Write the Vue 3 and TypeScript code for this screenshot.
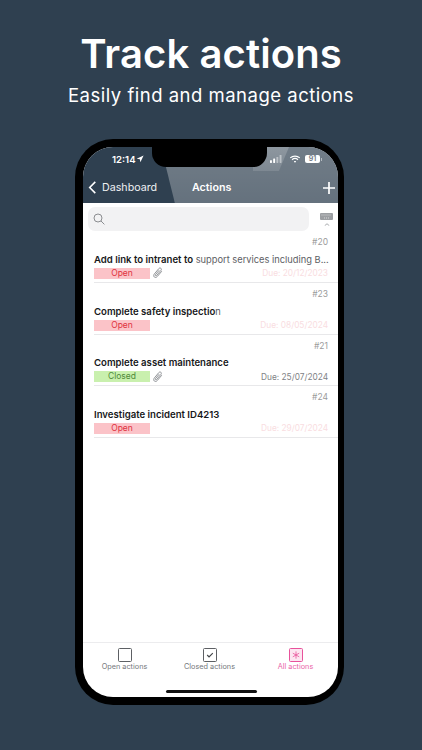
<script setup lang="ts">
interface Row { id: string; dark: string; light?: string; status: 'Open' | 'Closed'; clip: boolean; due: string }
const rows: Row[] = [
  { id: '#20', dark: 'Add link to intranet to', light: ' support services including B...', status: 'Open', clip: true, due: 'Due: 20/12/2023' },
  { id: '#23', dark: 'Complete safety inspectio', light: 'n', status: 'Open', clip: false, due: 'Due: 08/05/2024' },
  { id: '#21', dark: 'Complete asset maintenance', status: 'Closed', clip: true, due: 'Due: 25/07/2024' },
  { id: '#24', dark: 'Investigate incident ID4213', status: 'Open', clip: false, due: 'Due: 29/07/2024' },
]
</script>

<template>
  <main class="page">
    <h1 class="headline">Track actions</h1>
    <p class="sub">Easily find and manage actions</p>
    <div class="phone">
      <div class="screen">
        <div class="notch"></div>
        <div class="sheen"></div>
        <div class="glare"></div>
        <header class="head">
          <div class="status">
            <span class="time">12:14</span>
            <svg class="loc" viewBox="0 0 10 10"><path d="M9.500.5 .8 4.600l4 .6.7 4z" fill="#fff" /></svg>
            <span class="grow"></span>
            <svg class="signal" viewBox="0 0 15 10">
              <rect x="0" y="6.500" width="2.400" height="3.500" rx=".5" fill="#fff" />
              <rect x="4" y="4.500" width="2.400" height="5.500" rx=".5" fill="#fff" />
              <rect x="8" y="2.500" width="2.400" height="7.500" rx=".5" fill="#fff" opacity=".45" />
              <rect x="12" y="0" width="2.400" height="10" rx=".5" fill="#fff" opacity=".45" />
            </svg>
            <svg class="wifi" viewBox="0 0 14 10" fill="none" stroke="#fff" stroke-width="1.500">
              <path d="M1 3.600c3.400-3 8.600-3 12 0" />
              <path d="M3.300 5.900c2.100-1.800 5.300-1.800 7.400 0" />
              <path d="M7 9.800 5.500 8c.9-.6 2.100-.6 3 0z" fill="#fff" stroke="none" />
            </svg>
            <span class="batt">91</span>
            <span class="nub"></span>
          </div>
          <nav class="nav">
            <svg class="back" viewBox="0 0 9 14" fill="none" stroke="#fff" stroke-width="1.700"><path d="M7.500 1 1.500 7l6 6" /></svg>
            <span class="back-text">Dashboard</span>
            <span class="nav-title">Actions</span>
            <svg class="plus" viewBox="0 0 12 12" stroke="#fff" stroke-width="1.700"><path d="M6 0v12M0 6h12" /></svg>
          </nav>
        </header>
        <div class="search-row">
          <div class="search">
            <svg viewBox="0 0 12 12" fill="none" stroke="#8b8d90" stroke-width="1"><circle cx="5" cy="5" r="4" /><path d="m8 8 3.400 3.400" /></svg>
          </div>
          <div class="kbd">
            <svg class="keys" viewBox="0 0 13 7">
              <rect width="13" height="7" rx="1" fill="#9a9da1" />
              <path d="M1.500 2h10M4 5h5" stroke="#e4e5e6" stroke-width=".8" stroke-dasharray="1 1" />
            </svg>
            <svg class="up" viewBox="0 0 8 4" fill="none" stroke="#8d9094" stroke-width="1"><path d="m1 3.500 3-2.500 3 2.500" /></svg>
          </div>
        </div>
        <section class="list">
          <article v-for="row in rows" :key="row.id" class="row">
            <div class="num">{{ row.id }}</div>
            <div class="title">{{ row.dark }}<span class="light">{{ row.light }}</span></div>
            <div class="meta">
              <span class="badge" :class="row.status.toLowerCase()">{{ row.status }}</span>
              <svg v-if="row.clip" class="clip" viewBox="0 0 10 12" fill="none" stroke="#85888c" stroke-width=".9">
                <path d="M8.800 4.200 4.300 9.500c-.9 1.100-2.200 1.200-3 .5s-.8-2 .1-3.100l4.400-5.300c.6-.7 1.500-.8 2.100-.3s.6 1.400 0 2.100L3.600 8.500c-.3.400-.8.400-1.100.2s-.3-.7 0-1.100l3.700-4.400" />
              </svg>
              <span class="due" :class="{ late: row.status === 'Open' }">{{ row.due }}</span>
            </div>
          </article>
        </section>
        <footer class="tabs">
          <div class="tab">
            <span class="box"></span>
            <span>Open actions</span>
          </div>
          <div class="tab">
            <span class="box"><svg viewBox="0 0 10 8" fill="none" stroke="#44474a" stroke-width="1.500"><path d="m1.500 4 2.300 2.300 4.700-4.600" /></svg></span>
            <span>Closed actions</span>
          </div>
          <div class="tab active">
            <span class="box"><svg viewBox="0 0 10 10" fill="none" stroke="#e8529b" stroke-width="1"><path d="M5 .5v9M1 2.700l8 4.600M9 2.700 1 7.300" /></svg></span>
            <span>All actions</span>
          </div>
        </footer>
        <div class="home-wrap"><div class="home"></div></div>
      </div>
    </div>
  </main>
</template>

<style>
html, body { margin: 0; background: #2f4050; }
</style>

<style scoped>
.page {
  width: 422px;
  height: 750px;
  overflow: hidden;
  background: #2f4050;
  display: flex;
  flex-direction: column;
  align-items: center;
  font-family: "Inter", "Liberation Sans", sans-serif;
  color: #fff;
}
.headline {
  margin: 30px 0 0;
  font-size: 40px;
  line-height: 48px;
  font-weight: 600;
  letter-spacing: .1px;
}
.sub {
  margin: 4px 0 0;
  font-size: 18.500px;
  line-height: 26px;
  font-weight: 400;
  letter-spacing: .5px;
}
.phone {
  margin-top: 31px;
  margin-left: -3px;
  width: 269px;
  height: 566px;
  box-sizing: border-box;
  padding: 8px 6px 8px 8px;
  background: #000;
  border-radius: 38px;
}
.screen {
  position: relative;
  height: 100%;
  background: #fff;
  border-radius: 30px;
  overflow: hidden;
  display: flex;
  flex-direction: column;
}
.notch {
  position: absolute;
  z-index: 3;
  top: -2px;
  left: 69px;
  width: 115px;
  height: 22px;
  background: #000;
  border-radius: 0 0 14px 14px;
}
.sheen {
  position: absolute;
  z-index: 2;
  top: 0;
  left: 0;
  right: 0;
  height: 85px;
  background: linear-gradient(180deg, rgba(255, 255, 255, .32), rgba(255, 255, 255, .26) 66%, rgba(255, 255, 255, .015) 66%, rgba(255, 255, 255, .015));
  clip-path: polygon(78px 0, 100% 0, 100% 100%, 99px 100%);
  pointer-events: none;
}
.glare {
  position: absolute;
  z-index: 2;
  top: 0;
  left: 170px;
  width: 36px;
  height: 24px;
  background: linear-gradient(180deg, rgba(255, 255, 255, .2), rgba(255, 255, 255, .12));
  clip-path: polygon(0 0, 100% 0, 72% 100%, 0 100%);
  pointer-events: none;
}
.head {
  flex: none;
  height: 56px;
  background: #2f4050;
  position: relative;
  z-index: 1;
}
.status {
  height: 24px;
  padding: 0 0 0 29px;
  box-sizing: border-box;
  display: flex;
  align-items: center;
}
.time { font-size: 9.600px; font-weight: 600; position: relative; z-index: 4; }
.loc { width: 8px; height: 8px; position: relative; z-index: 4; }
.grow { flex: 1; }
.signal { width: 12px; height: 8px; position: relative; z-index: 4; }
.wifi { width: 12px; height: 8px; margin-left: 7px; position: relative; z-index: 4; }
.batt {
  position: relative;
  z-index: 4;
  margin-left: 4px;
  width: 15px;
  height: 8px;
  border-radius: 2px;
  background: #fff;
  color: #3c4a58;
  font-size: 7px;
  font-weight: 700;
  line-height: 8px;
  text-align: center;
}
.nub { width: 1px; height: 3px; margin: 0 16px 0 1px; background: rgba(255, 255, 255, .5); position: relative; z-index: 4; }
.nav {
  height: 32px;
  padding-top: 1px;
  box-sizing: border-box;
  display: flex;
  align-items: center;
  font-size: 10.700px;
  position: relative;
  z-index: 4;
}
.back { width: 9px; height: 13px; margin-left: 5px; }
.back-text { margin-left: 5px; width: 90px; color: #eef0f2; }
.nav-title { font-weight: 600; }
.plus { width: 12px; height: 12px; margin-left: auto; margin-right: 3px; }
.search-row {
  flex: none;
  height: 28px;
  display: flex;
  align-items: flex-start;
  padding: 4px 5px 0;
  box-sizing: border-box;
}
.search {
  width: 221px;
  height: 24px;
  box-sizing: border-box;
  padding-left: 5px;
  background: #f2f2f3;
  border-radius: 7px;
  display: flex;
  align-items: center;
}
.search svg { width: 12px; height: 12px; }
.kbd {
  margin: 6px 0 0 11px;
  width: 13px;
  display: flex;
  flex-direction: column;
  align-items: center;
  gap: 3px;
}
.keys { width: 13px; height: 7px; }
.up { width: 6px; height: 3px; }
.list { flex: 1; padding-left: 11px; }
.row {
  height: 51.500px;
  box-sizing: border-box;
  border-bottom: 1px solid #e8e8ea;
  padding-right: 10px;
}
.row:first-child { height: 52px; }
.num { padding-top: 6px; height: 11px; line-height: 11px; font-size: 8.500px; color: #9b9b9b; text-align: right; box-sizing: content-box; }
.title {
  margin-top: 4.600px;
  margin-bottom: .4px;
  font-size: 9.600px;
  line-height: 13px;
  font-weight: 600;
  color: #17181a;
  white-space: nowrap;
}
.light { color: #5d6064; font-weight: 400; font-size: 9.300px; }
.meta { margin-top: 2px; display: flex; align-items: center; height: 11px; }
.badge { width: 56px; height: 11px; line-height: 11px; text-align: center; font-size: 8.500px; }
.badge.open { background: #fbc3c8; color: #e0323e; }
.badge.closed { background: #c9f0ae; color: #4f8a3a; }
.clip { width: 10px; height: 12px; margin-left: 3px; }
.due { margin-left: auto; font-size: 8.300px; color: #808285; }
.due.late { color: #f9dde1; }
.tabs {
  flex: none;
  height: 42px;
  border-top: 1px solid #ececee;
  display: grid;
  grid-template-columns: repeat(3, 85px);
  padding-top: 5px;
  box-sizing: border-box;
}
.tab {
  display: flex;
  flex-direction: column;
  align-items: center;
  font-size: 7.300px;
  line-height: 10px;
  color: #75787c;
}
.tab:nth-child(1), .tab:nth-child(2) { position: relative; left: -1px; }
.box {
  width: 14px;
  height: 14px;
  box-sizing: border-box;
  border: 1.600px solid #5d6064;
  border-radius: 1.500px;
  display: flex;
  align-items: center;
  justify-content: center;
}
.box svg { width: 8px; height: 8px; }
.active { color: #ea65a8; }
.active .box { border-color: #e8529b; background: #fce6f1; }
.home-wrap { flex: none; height: 13px; display: flex; justify-content: center; align-items: center; }
.home { width: 91px; height: 3px; background: #111; border-radius: 2px; position: relative; left: 1px; top: 1px; }
</style>
